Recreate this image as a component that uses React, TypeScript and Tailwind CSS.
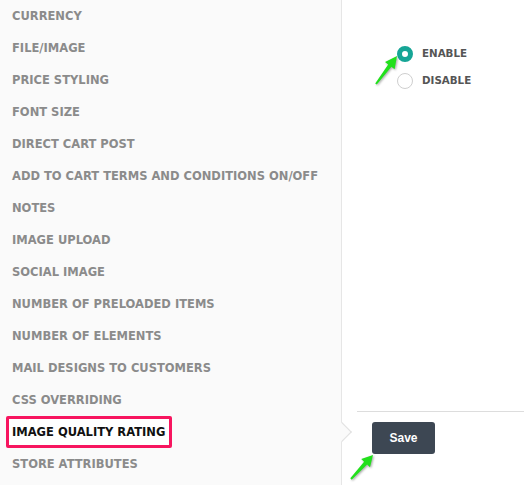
import React from "react";

const items = [
  "CURRENCY",
  "FILE/IMAGE",
  "PRICE STYLING",
  "FONT SIZE",
  "DIRECT CART POST",
  "ADD TO CART TERMS AND CONDITIONS ON/OFF",
  "NOTES",
  "IMAGE UPLOAD",
  "SOCIAL IMAGE",
  "NUMBER OF PRELOADED ITEMS",
  "NUMBER OF ELEMENTS",
  "MAIL DESIGNS TO CUSTOMERS",
  "CSS OVERRIDING",
  "IMAGE QUALITY RATING",
  "STORE ATTRIBUTES",
];

const selected = "IMAGE QUALITY RATING";

function Arrows() {
  return (
    <svg
      className="absolute left-0 top-0 pointer-events-none z-20 [filter:drop-shadow(1px_1px_1px_rgba(0,0,0,0.35))]"
      width="524"
      height="485"
      viewBox="0 0 524 485"
    >
      <polygon
        fill="#22e01c"
        points="397,56 394.6,69.2 391.4,66.8 376.8,84.6 375.2,83.4 388.2,64.4 385,62"
      />
      <polygon
        fill="#22e01c"
        points="373,455 370,467.2 367.1,464.5 351.7,479.7 350.3,478.3 364.1,461.75 361.2,459"
      />
    </svg>
  );
}

export default function App() {
  return (
    <div className="relative flex h-[485px] w-[524px] overflow-hidden bg-white font-['DejaVu_Sans',sans-serif]">
      <div className="relative w-[342px] shrink-0 border-r border-[#e6e6e6] bg-[#fafafa]">
        <ul className="flex flex-col">
          {items.map((item) =>
            item === selected ? (
              <li key={item} className="relative flex h-8 items-center">
                <div className="ml-[6px] flex h-8 w-[166px] items-center rounded-[2px] border-[3px] border-[#f7155f] bg-white pl-[3px] pt-px text-[11.5px] font-bold text-[#111]">
                  {item}
                </div>
                <span className="absolute right-[-8px] top-[9px] z-10 h-[14px] w-[14px] rotate-45 border-r border-t border-[#e0e0e0] bg-[#fafafa]" />
              </li>
            ) : (
              <li
                key={item}
                className="flex h-8 items-center pl-3 pt-px text-[11.5px] font-bold text-[#8b8b8b]"
              >
                {item}
              </li>
            )
          )}
        </ul>
      </div>

      <div className="flex flex-1 flex-col">
        <div className="flex flex-col gap-[11px] pl-[55px] pt-[46px]">
          <label className="flex items-center gap-[9px]">
            <span className="h-4 w-4 rounded-full border-[5px] border-[#16a596] bg-white" />
            <span className="text-[10.3px] font-bold text-[#555]">ENABLE</span>
          </label>
          <label className="flex items-center gap-[9px]">
            <span className="h-4 w-4 rounded-full border border-[#cfcfcf] bg-white" />
            <span className="text-[10.3px] font-bold text-[#555]">DISABLE</span>
          </label>
        </div>

        <div className="mt-auto mb-[31px] ml-[15px] border-t border-[#dddddd] pl-[15px] pt-[10px]">
          <button className="h-8 w-[63px] rounded-[3px] bg-[#3d4753] font-['Liberation_Sans',sans-serif] text-[12px] font-bold text-white">
            Save
          </button>
        </div>
      </div>

      <Arrows />
    </div>
  );
}
